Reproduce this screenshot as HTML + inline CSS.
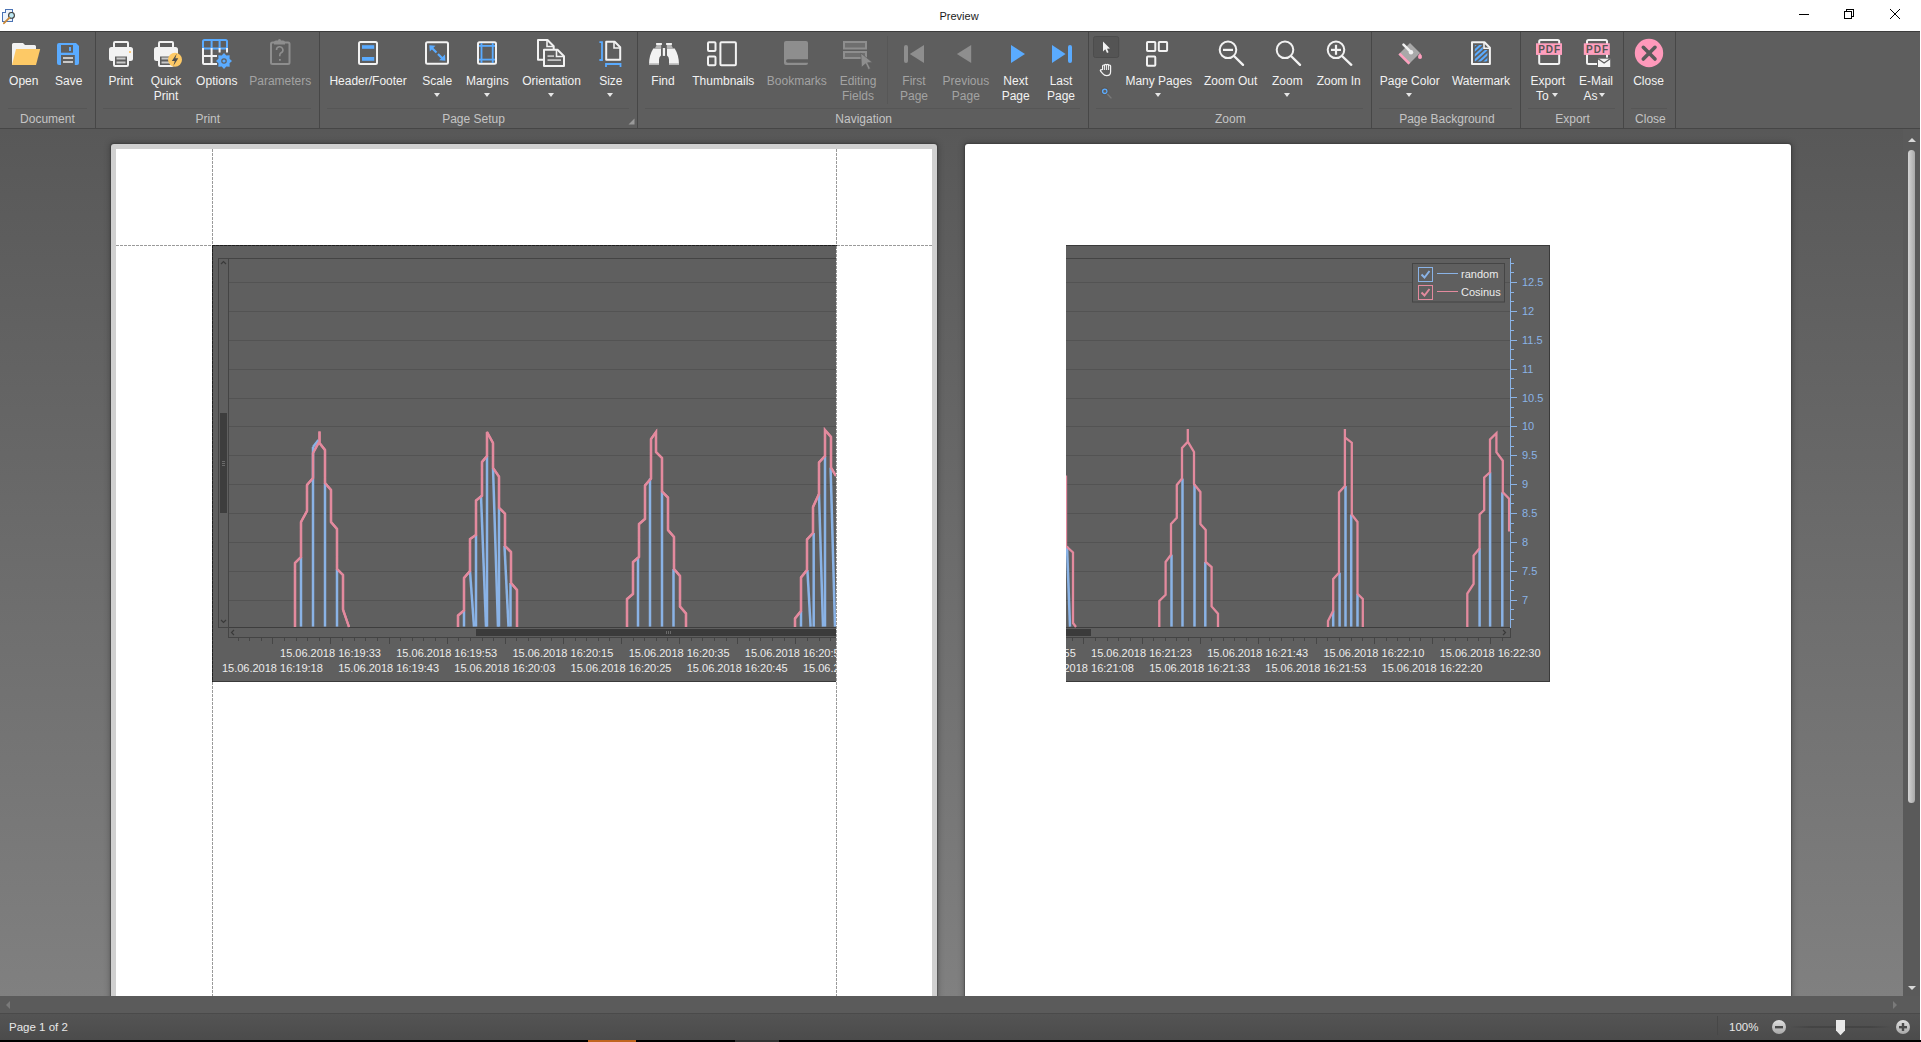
<!DOCTYPE html><html><head><meta charset="utf-8"><style>
*{margin:0;padding:0;box-sizing:border-box}
html,body{width:1921px;height:1042px;overflow:hidden;background:#fff;font-family:"Liberation Sans",sans-serif}
.a{position:absolute}
#title{left:0;top:0;width:1921px;height:31px;background:#fff}
#ribbon{left:0;top:31px;width:1920px;height:98px;background:#5e5e5e;border-top:1px solid #3c3c3c;border-bottom:1px solid #464646}
.sep{position:absolute;top:32px;width:1px;height:96px;background:#474747}
.sepf{position:absolute;top:36px;width:1px;height:68px;background:#575757}
.gl{position:absolute;top:108px;height:1px;background:#565656}
.lbl{position:absolute;top:74px;font-size:12px;line-height:15px;color:#f2f2f2;text-align:center;white-space:nowrap;transform:translateX(-50%)}
.dis{color:#a3a3a3}
.grp{position:absolute;top:112px;font-size:12px;line-height:15px;color:#c4c4c4;white-space:nowrap;transform:translateX(-50%)}
.dd{position:absolute;width:0;height:0;border-left:3.5px solid transparent;border-right:3.5px solid transparent;border-top:4px solid #e6e6e6}
#doc{left:0;top:129px;width:1903px;height:867px;background:linear-gradient(#585858,#808080)}
#vsb{left:1903px;top:129px;width:17px;height:867px;background:#5a5a5a}
#hsb{left:0;top:996px;width:1920px;height:18px;background:#5b5b5b;border-bottom:1px solid #4a4a4a}
#status{left:0;top:1014px;width:1920px;height:26px;background:linear-gradient(#545454,#4b4b4b)}
#black{left:0;top:1040px;width:1921px;height:2px;background:#000}
#rborder{left:1920px;top:0;width:1px;height:1040px;background:#fff}
.cl{position:absolute;font-size:11px;line-height:13px;color:#ececec;white-space:nowrap;transform:translateX(-50%)}
.al{position:absolute;font-size:11px;line-height:13px;color:#8ab3e6;white-space:nowrap}
.lg{position:absolute;font-size:11px;line-height:13px;color:#ececec;white-space:nowrap}
</style></head><body>
<div id="title" class="a"><div class="a" style="left:939.5px;top:8.5px;font-size:11px;line-height:15px;color:#1a1a1a">Preview</div></div>
<div id="ribbon" class="a"></div>
<div class="lbl" style="left:23.75px">Open</div>
<div class="lbl" style="left:68.8px">Save</div>
<div class="lbl" style="left:120.8px">Print</div>
<div class="lbl" style="left:166px">Quick<br>Print</div>
<div class="lbl" style="left:216.8px">Options</div>
<div class="lbl dis" style="left:280.25px">Parameters</div>
<div class="lbl" style="left:368.1px">Header/Footer</div>
<div class="lbl" style="left:437.2px">Scale</div>
<div class="dd" style="left:433.7px;top:93px"></div>
<div class="lbl" style="left:487.3px">Margins</div>
<div class="dd" style="left:483.8px;top:93px"></div>
<div class="lbl" style="left:551.5px">Orientation</div>
<div class="dd" style="left:548.0px;top:93px"></div>
<div class="lbl" style="left:610.8px">Size</div>
<div class="dd" style="left:607.3px;top:93px"></div>
<div class="lbl" style="left:663px">Find</div>
<div class="lbl" style="left:723.3px">Thumbnails</div>
<div class="lbl dis" style="left:796.8px">Bookmarks</div>
<div class="lbl dis" style="left:858px">Editing<br>Fields</div>
<div class="lbl dis" style="left:914px">First<br>Page</div>
<div class="lbl dis" style="left:965.8px">Previous<br>Page</div>
<div class="lbl" style="left:1015.7px">Next<br>Page</div>
<div class="lbl" style="left:1061px">Last<br>Page</div>
<div class="lbl" style="left:1158.75px">Many Pages</div>
<div class="dd" style="left:1155.2px;top:93px"></div>
<div class="lbl" style="left:1230.7px">Zoom Out</div>
<div class="lbl" style="left:1287.3px">Zoom</div>
<div class="dd" style="left:1283.8px;top:93px"></div>
<div class="lbl" style="left:1338.7px">Zoom In</div>
<div class="lbl" style="left:1409.75px">Page Color</div>
<div class="dd" style="left:1406.2px;top:93px"></div>
<div class="lbl" style="left:1481px">Watermark</div>
<div class="lbl" style="left:1547.8px">Export<br><span style="padding-right:11px">To</span></div>
<div class="lbl" style="left:1596px">E-Mail<br><span style="padding-right:11px">As</span></div>
<div class="lbl" style="left:1648.5px">Close</div>
<div class="dd" style="left:1551.6px;top:93px"></div>
<div class="dd" style="left:1598.6px;top:93px"></div>
<div class="grp" style="left:47.4px">Document</div>
<div class="grp" style="left:207.8px">Print</div>
<div class="grp" style="left:473.5px">Page Setup</div>
<div class="grp" style="left:863.7px">Navigation</div>
<div class="grp" style="left:1230.3px">Zoom</div>
<div class="grp" style="left:1446.9px">Page Background</div>
<div class="grp" style="left:1572.6px">Export</div>
<div class="grp" style="left:1650.4px">Close</div>
<div class="sep" style="left:95px"></div>
<div class="sep" style="left:319px"></div>
<div class="sep" style="left:637px"></div>
<div class="sep" style="left:1088px"></div>
<div class="sep" style="left:1371px"></div>
<div class="sep" style="left:1520px"></div>
<div class="sep" style="left:1623px"></div>
<div class="sep" style="left:1675px"></div>
<div class="sepf" style="left:887px"></div>
<div class="gl" style="left:8px;width:79px"></div>
<div class="gl" style="left:103px;width:208px"></div>
<div class="gl" style="left:327px;width:302px"></div>
<div class="gl" style="left:645px;width:435px"></div>
<div class="gl" style="left:1096px;width:267px"></div>
<div class="gl" style="left:1379px;width:133px"></div>
<div class="gl" style="left:1528px;width:87px"></div>
<div class="gl" style="left:1631px;width:36px"></div>
<svg class="a" style="left:0;top:0" width="1921" height="130" viewBox="0 0 1921 130">
<path d="M2.6,12.6 H5.6 V9.6 H12.6 V21.6 H2.6 Z" fill="#eef4fb" stroke="#4a72b4" stroke-width="1.2" shape-rendering="crispEdges"/>
<circle cx="11.5" cy="15.4" r="2.9" fill="#bfeaf5" stroke="#3a3a3a" stroke-width="1.1"/>
<line x1="9.3" y1="17.8" x2="4" y2="23.2" stroke="#c98a3a" stroke-width="1.9" stroke-linecap="round"/>
<g stroke="#000" stroke-width="1" fill="none" shape-rendering="crispEdges">
<line x1="1799" y1="14.5" x2="1809" y2="14.5"/>
<rect x="1844.5" y="11.5" width="7" height="7"/>
<polyline points="1846.5,11.5 1846.5,9.5 1853.5,9.5 1853.5,16.5 1851.5,16.5"/>
</g>
<g stroke="#000" stroke-width="1"><line x1="1890" y1="9" x2="1900" y2="19"/><line x1="1900" y1="9" x2="1890" y2="19"/></g>
<path d="M12,44.5 a1.5,1.5 0 0 1 1.5,-1.5 h9.5 l2,2 h9.5 a1.5,1.5 0 0 1 1.5,1.5 V65 H12 Z" fill="#f2f2f2"/>
<polygon points="16,49 40.2,49 36,65 12,65" fill="#fdc966"/>
<path d="M57,45 a2,2 0 0 1 2,-2 h17 l3,3 v17 a2,2 0 0 1 -2,2 h-18 a2,2 0 0 1 -2,-2 Z" fill="#5aabff"/>
<rect x="61" y="45" width="12" height="7.7" fill="#5e5e5e"/>
<rect x="69" y="47" width="2" height="4" fill="#5aabff"/>
<rect x="61" y="55" width="13.8" height="10" fill="#5e5e5e"/>
<rect x="63" y="57" width="10" height="2" fill="#c8c8c8"/><rect x="63" y="61" width="10" height="2" fill="#c8c8c8"/>
<g transform="translate(0,0)">
<rect x="114" y="42" width="14" height="9" rx="1" fill="#5e5e5e" stroke="#f2f2f2" stroke-width="2"/>
<rect x="109" y="47" width="24" height="14" rx="2.5" fill="#f2f2f2"/>
<rect x="114" y="55.5" width="14" height="10.5" rx="1" fill="#5e5e5e" stroke="#f2f2f2" stroke-width="2"/>
<rect x="116.5" y="57.5" width="9" height="2" fill="#c8c8c8"/><rect x="116.5" y="61.5" width="9" height="2" fill="#c8c8c8"/>
</g>
<g transform="translate(45,0)">
<rect x="114" y="42" width="14" height="9" rx="1" fill="#5e5e5e" stroke="#f2f2f2" stroke-width="2"/>
<rect x="109" y="47" width="24" height="14" rx="2.5" fill="#f2f2f2"/>
<rect x="114" y="55.5" width="14" height="10.5" rx="1" fill="#5e5e5e" stroke="#f2f2f2" stroke-width="2"/>
<rect x="116.5" y="57.5" width="9" height="2" fill="#c8c8c8"/><rect x="116.5" y="61.5" width="9" height="2" fill="#c8c8c8"/>
</g>
<circle cx="130" cy="52" r="1" fill="#fdb94d"/>
<circle cx="175" cy="59.8" r="7" fill="#fdc966"/>
<polygon points="176.8,53.5 171.8,61 174.8,61 173.3,66 178.3,58.3 175.3,58.3" fill="#4e4e4e"/>
<rect x="203" y="40" width="24" height="8.6" rx="1.5" fill="none" stroke="#5aabff" stroke-width="2"/>
<rect x="210.6" y="40" width="2" height="8" fill="#5aabff"/><rect x="218.6" y="40" width="2" height="8" fill="#5aabff"/>
<path d="M203,48 V63 a1,1 0 0 0 1,1 H217 M202,56 H217 M211.6,48 V64 M219.6,48 V52.5 M227,48 V52.5" fill="none" stroke="#f2f2f2" stroke-width="2"/>
<polygon points="224.00,53.00 226.30,55.46 229.66,55.34 229.54,58.70 232.00,61.00 229.54,63.30 229.66,66.66 226.30,66.54 224.00,69.00 221.70,66.54 218.34,66.66 218.46,63.30 216.00,61.00 218.46,58.70 218.34,55.34 221.70,55.46" fill="#5aabff"/>
<circle cx="224" cy="61" r="2.2" fill="none" stroke="#5e5e5e" stroke-width="1.2"/>
<rect x="271" y="42.5" width="18.5" height="21.5" rx="1.5" fill="none" stroke="#8e8e8e" stroke-width="2"/>
<path d="M274,44.5 h11 v-2 a2,2 0 0 0 -2,-2 h-2 a1.5,1.5 0 0 0 -3,0 h-2 a2,2 0 0 0 -2,2 Z" fill="#8e8e8e"/>
<path d="M276.5,50 a3.2,3.2 0 1 1 4.6,2.8 c-1,0.6 -1.3,1 -1.3,2.4 v1" fill="none" stroke="#8e8e8e" stroke-width="1.6"/>
<rect x="279" y="59" width="1.8" height="1.8" fill="#8e8e8e"/>
<rect x="359" y="42" width="18" height="22" rx="1.5" fill="none" stroke="#f2f2f2" stroke-width="2"/>
<rect x="362" y="45.2" width="12.2" height="3.6" fill="#5aabff"/><rect x="362" y="57" width="12.2" height="3.8" fill="#5aabff"/>
<rect x="426" y="42.3" width="22" height="21.5" rx="1.5" fill="none" stroke="#f2f2f2" stroke-width="2"/>
<line x1="431" y1="47" x2="436.5" y2="52.5" stroke="#5aabff" stroke-width="2.2"/><line x1="438" y1="54" x2="443.5" y2="59.5" stroke="#5aabff" stroke-width="2.2"/>
<polygon points="429.3,45.3 435.5,45.8 429.8,51.5" fill="#5aabff"/><polygon points="445.4,60.8 439.2,60.3 444.9,54.6" fill="#5aabff"/>
<rect x="478" y="42.3" width="18" height="21.5" rx="1.5" fill="none" stroke="#f2f2f2" stroke-width="2"/>
<rect x="480.6" y="43" width="1.8" height="20" fill="#5aabff"/><rect x="491.8" y="43" width="1.8" height="20" fill="#5aabff"/>
<rect x="479" y="45" width="16" height="1.8" fill="#5aabff"/><rect x="479" y="58.7" width="16" height="1.8" fill="#5aabff"/>
<path d="M538,40 h9.5 l6.2,6.2 V59.8 H538 Z" fill="none" stroke="#f2f2f2" stroke-width="2" stroke-linejoin="round"/>
<path d="M547,40 v6.5 h6.5" fill="none" stroke="#f2f2f2" stroke-width="1.6"/>
<path d="M544,49.7 h13.5 l6.5,6.5 V66 H544 Z" fill="#5e5e5e" stroke="#f2f2f2" stroke-width="2" stroke-linejoin="round"/>
<path d="M556.5,49.7 v6.8 h7" fill="none" stroke="#f2f2f2" stroke-width="1.6"/>
<rect x="547.5" y="55.2" width="6.5" height="1.8" fill="#c0c0c0"/><rect x="547.5" y="59.2" width="13.5" height="1.8" fill="#c0c0c0"/>
<path d="M606.2,41.7 h8.5 l5.5,5.5 V59.8 H606.2 Z" fill="none" stroke="#f2f2f2" stroke-width="2" stroke-linejoin="round"/>
<path d="M614,41.7 v6.3 h6.2" fill="none" stroke="#f2f2f2" stroke-width="1.6"/>
<path d="M599.4,42.2 h2.6 V60 h-2.6" fill="none" stroke="#5aabff" stroke-width="1.8"/>
<path d="M606,67 v-3 h14.5 v3" fill="none" stroke="#5aabff" stroke-width="1.8"/>
<g id="binoL">
<path d="M653.3,48.6 H661 V55.6 Q659,57.2 659,59.5 V65 H649 C649,58 650.5,53 653.3,48.6 Z" fill="#f2f2f2"/>
<path d="M656.7,44.8 H661.2 V48.8 H654.8 Z" fill="#b4b4b4"/>
<rect x="656" y="43" width="6" height="1.9" rx="0.6" fill="#f2f2f2"/>
<rect x="649" y="63.3" width="10" height="1.7" fill="#b4b4b4"/>
</g>
<use href="#binoL" transform="translate(1328,0) scale(-1,1)"/>
<rect x="662.8" y="48" width="2.3" height="7.9" fill="#f2f2f2"/>
<rect x="708" y="42.2" width="7.5" height="8.7" rx="1" fill="none" stroke="#f2f2f2" stroke-width="2"/>
<rect x="708" y="56.6" width="7.5" height="8.7" rx="1" fill="none" stroke="#f2f2f2" stroke-width="2"/>
<rect x="720.4" y="42.2" width="15.5" height="23.1" rx="1" fill="none" stroke="#f2f2f2" stroke-width="2"/>
<path d="M786,41 h20 a2,2 0 0 1 2,2 V63 a2,2 0 0 1 -2,2 H786 a2,2 0 0 1 -2,-2 V43 a2,2 0 0 1 2,-2 Z" fill="#8e8e8e"/>
<rect x="786" y="59.2" width="24" height="3.5" rx="1.75" fill="#5e5e5e"/>
<rect x="844" y="42" width="22" height="6.5" fill="#6f6f6f" stroke="#8e8e8e" stroke-width="2"/>
<rect x="844" y="52" width="22" height="6" fill="#6f6f6f" stroke="#8e8e8e" stroke-width="2"/>
<polygon points="860.8,53 872.5,62.5 867.6,62.8 870.5,68.5 868.3,69.5 865.6,63.8 861.5,67.3" fill="#8e8e8e" stroke="#5e5e5e" stroke-width="0.7"/>
<rect x="904" y="45" width="4" height="18" rx="2" fill="#8e8e8e"/>
<polygon points="909.8,54 924,45 924,63" fill="#8e8e8e"/>
<polygon points="956.9,54 971.2,45 971.2,63" fill="#8e8e8e"/>
<polygon points="1011,45 1025,54 1011,63" fill="#5aabff"/>
<polygon points="1052,45 1065.6,54 1052,63" fill="#5aabff"/>
<rect x="1068" y="45" width="4" height="18" rx="2" fill="#5aabff"/>
<rect x="1093.5" y="36.5" width="25.2" height="21" rx="2" fill="#545454" stroke="#4c4c4c" stroke-width="1"/>
<polygon points="1103,41.5 1103,51.5 1105.3,49.3 1107,53 1108.6,52.3 1107,48.7 1110,48.5" fill="#f2f2f2"/>
<path d="M1102.6,69.5 V66 a1,1 0 0 1 2,0 V65.3 a1,1 0 0 1 2,0 a1,1 0 0 1 2,0 V66 a1,1 0 0 1 2,0 V71.8 c0,2.3 -1.7,3.9 -4,3.9 c-1.8,0 -2.9,-0.8 -3.9,-2 l-2.2,-2.7 c-0.6,-0.8 0.3,-1.8 1.2,-1.2 Z" fill="none" stroke="#f2f2f2" stroke-width="1.2" stroke-linejoin="round"/>
<path d="M1104.6,65.5 V70 M1106.6,65.3 V70 M1108.6,66 V70" stroke="#f2f2f2" stroke-width="1"/>
<circle cx="1104.8" cy="91.3" r="2.2" fill="none" stroke="#5aabff" stroke-width="1.3"/>
<line x1="1106.6" y1="93.2" x2="1111.4" y2="98.4" stroke="#7a7a7a" stroke-width="1.4"/><circle cx="1104.7" cy="91.2" r="3.6" fill="none" stroke="#555" stroke-width="0.8"/>
<rect x="1147" y="42" width="8.3" height="9.1" rx="0.8" fill="none" stroke="#f2f2f2" stroke-width="2"/>
<rect x="1158.8" y="42" width="8.3" height="9.1" rx="0.8" fill="none" stroke="#f2f2f2" stroke-width="2"/>
<rect x="1147" y="56.6" width="8.3" height="9.1" rx="0.8" fill="none" stroke="#f2f2f2" stroke-width="2"/>
<circle cx="1228" cy="49.8" r="8.3" fill="none" stroke="#f2f2f2" stroke-width="2"/>
<line x1="1234" y1="56" x2="1243" y2="64.8" stroke="#f2f2f2" stroke-width="2.4" stroke-linecap="round"/>
<circle cx="1285" cy="49.8" r="8.3" fill="none" stroke="#f2f2f2" stroke-width="2"/>
<line x1="1291" y1="56" x2="1300" y2="64.8" stroke="#f2f2f2" stroke-width="2.4" stroke-linecap="round"/>
<circle cx="1336" cy="49.8" r="8.3" fill="none" stroke="#f2f2f2" stroke-width="2"/>
<line x1="1342" y1="56" x2="1351.3" y2="64.8" stroke="#f2f2f2" stroke-width="2.4" stroke-linecap="round"/>
<rect x="1223" y="48.8" width="10" height="2.2" fill="#f2f2f2"/>
<rect x="1331" y="48.8" width="10" height="2.2" fill="#f2f2f2"/><rect x="1334.9" y="44.8" width="2.2" height="10" fill="#f2f2f2"/>
<polygon points="1398.5,54.5 1410,43 1420,53 1408.5,64.5" fill="#a9a9a9"/>
<polygon points="1398.5,54.5 1400.3,52.7 1410.3,62.7 1408.5,64.5" fill="#ff9fbe"/>
<line x1="1403.5" y1="44.6" x2="1410.5" y2="51.6" stroke="#f2f2f2" stroke-width="2.6" stroke-linecap="round"/>
<circle cx="1411" cy="52.3" r="2.2" fill="#f2f2f2"/>
<circle cx="1420" cy="57" r="2" fill="#ff9fbe"/><polygon points="1418.2,56 1420,53 1421.8,56" fill="#ff9fbe"/>
<path d="M1472,42.3 h12.5 l5.4,5.4 V64 H1472 Z" fill="#5e5e5e" stroke="#f2f2f2" stroke-width="2" stroke-linejoin="round"/>
<path d="M1484,42.3 v6 h5.9" fill="none" stroke="#f2f2f2" stroke-width="1.6"/>
<clipPath id="wmc"><path d="M1474.8,45 h8 v5 h4.6 V61.6 H1474.8 Z"/></clipPath>
<g clip-path="url(#wmc)" stroke="#5aabff" stroke-width="2.1">
<line x1="1443.0" y1="64" x2="1465.0" y2="44"/>
<line x1="1448.6" y1="64" x2="1470.6" y2="44"/>
<line x1="1454.2" y1="64" x2="1476.2" y2="44"/>
<line x1="1459.8" y1="64" x2="1481.8" y2="44"/>
<line x1="1465.4" y1="64" x2="1487.4" y2="44"/>
<line x1="1471.0" y1="64" x2="1493.0" y2="44"/>
<line x1="1476.6" y1="64" x2="1498.6" y2="44"/>
<line x1="1482.2" y1="64" x2="1504.2" y2="44"/>
<line x1="1487.8" y1="64" x2="1509.8" y2="44"/>
</g>
<g transform="translate(0,0)">
<rect x="1539.2" y="40" width="20" height="24" rx="1.5" fill="none" stroke="#f2f2f2" stroke-width="2"/>
<rect x="1536" y="43.3" width="26" height="11.6" fill="#ff9fbe"/>
<text x="1538.2" y="52.8" font-family="Liberation Sans" font-weight="bold" font-size="10" fill="#555555" letter-spacing="1">PDF</text>
</g>
<g transform="translate(47.8,0)">
<rect x="1539.2" y="40" width="20" height="24" rx="1.5" fill="none" stroke="#f2f2f2" stroke-width="2"/>
<rect x="1536" y="43.3" width="26" height="11.6" fill="#ff9fbe"/>
<text x="1538.2" y="52.8" font-family="Liberation Sans" font-weight="bold" font-size="10" fill="#555555" letter-spacing="1">PDF</text>
</g>
<rect x="1597" y="57.6" width="14" height="10" fill="#5e5e5e"/>
<rect x="1598" y="58.7" width="12.2" height="8.3" fill="#f2f2f2"/>
<polyline points="1598,58.7 1604.1,63 1610.2,58.7" fill="none" stroke="#5e5e5e" stroke-width="1.2"/>
<circle cx="1649" cy="53" r="14.2" fill="#ff99bb"/>
<g stroke="#5a5a5a" stroke-width="3.6" stroke-linecap="round"><line x1="1643.3" y1="47.3" x2="1655" y2="59"/><line x1="1655" y1="47.3" x2="1643.3" y2="59"/></g>
<polygon points="634.5,118.5 634.5,124.5 628.5,124.5" fill="#9a9a9a"/>
</svg>
<div id="doc" class="a"></div>
<div class="a" style="left:111px;top:144px;width:826px;height:860px;border-radius:3px;background:#d0d0d0;box-shadow:0 0 1px 0.5px rgba(50,50,50,.4),0 0 6px 1px rgba(0,0,0,.28)"></div>
<div class="a" style="left:116px;top:149px;width:816px;height:860px;background:#fff"></div>
<div class="a" style="left:965px;top:144px;width:826px;height:860px;border-radius:3px;background:#fff;box-shadow:0 0 1px 0.5px rgba(50,50,50,.4),0 0 6px 1px rgba(0,0,0,.28)"></div>
<svg class="a" style="left:212px;top:244px" width="624" height="440" viewBox="212 244 624 440">
<g transform="translate(0,0)" shape-rendering="crispEdges">
<rect x="212" y="245" width="1108" height="437" fill="#5f5f5f"/>
<rect x="212" y="245" width="1108" height="1" fill="#3a3a3a"/>
<rect x="212" y="681" width="1108" height="1" fill="#3a3a3a"/>
<rect x="212" y="245" width="1" height="437" fill="#3a3a3a"/>
<rect x="1319" y="245" width="1" height="437" fill="#3a3a3a"/>
<rect x="218" y="258" width="1062" height="1" fill="#444"/>
<rect x="218" y="258" width="1" height="370" fill="#444"/>
<rect x="228" y="258" width="1" height="370" fill="#444"/>
<rect x="219" y="627" width="10" height="1" fill="#444"/>
<rect x="220" y="413" width="7" height="100" fill="#3d3d3d"/>
<rect x="229" y="282" width="1051" height="1" fill="#535353"/>
<rect x="229" y="311" width="1051" height="1" fill="#535353"/>
<rect x="229" y="340" width="1051" height="1" fill="#535353"/>
<rect x="229" y="369" width="1051" height="1" fill="#535353"/>
<rect x="229" y="398" width="1051" height="1" fill="#535353"/>
<rect x="229" y="426" width="1051" height="1" fill="#535353"/>
<rect x="229" y="455" width="1051" height="1" fill="#535353"/>
<rect x="229" y="484" width="1051" height="1" fill="#535353"/>
<rect x="229" y="513" width="1051" height="1" fill="#535353"/>
<rect x="229" y="542" width="1051" height="1" fill="#535353"/>
<rect x="229" y="571" width="1051" height="1" fill="#535353"/>
<rect x="229" y="600" width="1051" height="1" fill="#535353"/>
<rect x="228" y="627" width="1052" height="1" fill="#3e3e3e"/>
<rect x="228" y="637" width="1052" height="1" fill="#444"/>
<rect x="228" y="627" width="1" height="11" fill="#444"/>
<rect x="1280" y="627" width="1" height="11" fill="#444"/>
<rect x="476" y="629" width="385" height="7" fill="#3b3b3b"/>
<rect x="666" y="631" width="1" height="3" fill="#6a6a6a"/><rect x="668" y="631" width="1" height="3" fill="#6a6a6a"/><rect x="670" y="631" width="1" height="3" fill="#6a6a6a"/>
<rect x="222" y="461" width="3" height="1" fill="#6a6a6a"/><rect x="222" y="463" width="3" height="1" fill="#6a6a6a"/><rect x="222" y="465" width="3" height="1" fill="#6a6a6a"/>
<rect x="238" y="638" width="1" height="3" fill="#464646"/>
<rect x="249" y="638" width="1" height="3" fill="#464646"/>
<rect x="261" y="638" width="1" height="3" fill="#464646"/>
<rect x="272" y="638" width="1" height="6" fill="#464646"/>
<rect x="284" y="638" width="1" height="3" fill="#464646"/>
<rect x="296" y="638" width="1" height="3" fill="#464646"/>
<rect x="307" y="638" width="1" height="3" fill="#464646"/>
<rect x="319" y="638" width="1" height="3" fill="#464646"/>
<rect x="330" y="638" width="1" height="6" fill="#464646"/>
<rect x="342" y="638" width="1" height="3" fill="#464646"/>
<rect x="354" y="638" width="1" height="3" fill="#464646"/>
<rect x="365" y="638" width="1" height="3" fill="#464646"/>
<rect x="377" y="638" width="1" height="3" fill="#464646"/>
<rect x="389" y="638" width="1" height="6" fill="#464646"/>
<rect x="400" y="638" width="1" height="3" fill="#464646"/>
<rect x="412" y="638" width="1" height="3" fill="#464646"/>
<rect x="423" y="638" width="1" height="3" fill="#464646"/>
<rect x="435" y="638" width="1" height="3" fill="#464646"/>
<rect x="447" y="638" width="1" height="6" fill="#464646"/>
<rect x="458" y="638" width="1" height="3" fill="#464646"/>
<rect x="470" y="638" width="1" height="3" fill="#464646"/>
<rect x="482" y="638" width="1" height="3" fill="#464646"/>
<rect x="493" y="638" width="1" height="3" fill="#464646"/>
<rect x="505" y="638" width="1" height="6" fill="#464646"/>
<rect x="516" y="638" width="1" height="3" fill="#464646"/>
<rect x="528" y="638" width="1" height="3" fill="#464646"/>
<rect x="540" y="638" width="1" height="3" fill="#464646"/>
<rect x="551" y="638" width="1" height="3" fill="#464646"/>
<rect x="563" y="638" width="1" height="6" fill="#464646"/>
<rect x="575" y="638" width="1" height="3" fill="#464646"/>
<rect x="586" y="638" width="1" height="3" fill="#464646"/>
<rect x="598" y="638" width="1" height="3" fill="#464646"/>
<rect x="609" y="638" width="1" height="3" fill="#464646"/>
<rect x="621" y="638" width="1" height="6" fill="#464646"/>
<rect x="633" y="638" width="1" height="3" fill="#464646"/>
<rect x="644" y="638" width="1" height="3" fill="#464646"/>
<rect x="656" y="638" width="1" height="3" fill="#464646"/>
<rect x="667" y="638" width="1" height="3" fill="#464646"/>
<rect x="679" y="638" width="1" height="6" fill="#464646"/>
<rect x="691" y="638" width="1" height="3" fill="#464646"/>
<rect x="702" y="638" width="1" height="3" fill="#464646"/>
<rect x="714" y="638" width="1" height="3" fill="#464646"/>
<rect x="726" y="638" width="1" height="3" fill="#464646"/>
<rect x="737" y="638" width="1" height="6" fill="#464646"/>
<rect x="749" y="638" width="1" height="3" fill="#464646"/>
<rect x="760" y="638" width="1" height="3" fill="#464646"/>
<rect x="772" y="638" width="1" height="3" fill="#464646"/>
<rect x="784" y="638" width="1" height="3" fill="#464646"/>
<rect x="795" y="638" width="1" height="6" fill="#464646"/>
<rect x="807" y="638" width="1" height="3" fill="#464646"/>
<rect x="819" y="638" width="1" height="3" fill="#464646"/>
<rect x="830" y="638" width="1" height="3" fill="#464646"/>
<rect x="842" y="638" width="1" height="3" fill="#464646"/>
<rect x="853" y="638" width="1" height="6" fill="#464646"/>
<rect x="865" y="638" width="1" height="3" fill="#464646"/>
<rect x="877" y="638" width="1" height="3" fill="#464646"/>
<rect x="888" y="638" width="1" height="3" fill="#464646"/>
<rect x="900" y="638" width="1" height="3" fill="#464646"/>
<rect x="912" y="638" width="1" height="6" fill="#464646"/>
<rect x="923" y="638" width="1" height="3" fill="#464646"/>
<rect x="935" y="638" width="1" height="3" fill="#464646"/>
<rect x="946" y="638" width="1" height="3" fill="#464646"/>
<rect x="958" y="638" width="1" height="3" fill="#464646"/>
<rect x="970" y="638" width="1" height="6" fill="#464646"/>
<rect x="981" y="638" width="1" height="3" fill="#464646"/>
<rect x="993" y="638" width="1" height="3" fill="#464646"/>
<rect x="1004" y="638" width="1" height="3" fill="#464646"/>
<rect x="1016" y="638" width="1" height="3" fill="#464646"/>
<rect x="1028" y="638" width="1" height="6" fill="#464646"/>
<rect x="1039" y="638" width="1" height="3" fill="#464646"/>
<rect x="1051" y="638" width="1" height="3" fill="#464646"/>
<rect x="1063" y="638" width="1" height="3" fill="#464646"/>
<rect x="1074" y="638" width="1" height="3" fill="#464646"/>
<rect x="1086" y="638" width="1" height="6" fill="#464646"/>
<rect x="1097" y="638" width="1" height="3" fill="#464646"/>
<rect x="1109" y="638" width="1" height="3" fill="#464646"/>
<rect x="1121" y="638" width="1" height="3" fill="#464646"/>
<rect x="1132" y="638" width="1" height="3" fill="#464646"/>
<rect x="1144" y="638" width="1" height="6" fill="#464646"/>
<rect x="1156" y="638" width="1" height="3" fill="#464646"/>
<rect x="1167" y="638" width="1" height="3" fill="#464646"/>
<rect x="1179" y="638" width="1" height="3" fill="#464646"/>
<rect x="1190" y="638" width="1" height="3" fill="#464646"/>
<rect x="1202" y="638" width="1" height="6" fill="#464646"/>
<rect x="1214" y="638" width="1" height="3" fill="#464646"/>
<rect x="1225" y="638" width="1" height="3" fill="#464646"/>
<rect x="1237" y="638" width="1" height="3" fill="#464646"/>
<rect x="1248" y="638" width="1" height="3" fill="#464646"/>
<rect x="1260" y="638" width="1" height="6" fill="#464646"/>
<rect x="1272" y="638" width="1" height="3" fill="#464646"/>
</g>
<g fill="none" stroke="#3a3a3a" stroke-width="1.2">
<polyline points="221,264 223.5,261.5 226,264"/>
<polyline points="221,620 223.5,622.5 226,620"/>
<polyline points="234,630 231.5,632.5 234,635"/>
</g>
<g fill="none" stroke="#e38a9e" stroke-width="2.3" stroke-linejoin="miter">
<polyline points="295,627 295,563 301,557 301,522 307,511 307,485 313,478 313,453 318.5,443 319.5,443 319.5,431.5 319.5,443 325,450 325,483 331,490 331,522 337,529 337,569 343,575 343,609.5 349,627"/>
<polyline points="458,627 458,615.5 464,610.5 464,578 470,571 470,539 476,535 476,500.6 482,495.6 482,462 487,456 487,432 493,443 493,468 499,476.5 499,507.7 505,513.7 505,546 511,552 511,583 517,590 517,627"/>
<polyline points="627,627 627,599 633,594 633,562 639,557 639,524 645,519 645,485.5 651,478.5 651,439 656,432 656,452 662,458 662,491.6 668,497.6 668,530 674,537 674,569 680,576 680,606.5 686,613.5 686,627"/>
<polyline points="795,627 795,618.5 801,611 801,577.5 807,570 807,539.5 813,533 813,507 819,494 819,462.5 825,456 825,430 831,437 831,467.7 836,476"/>
</g>
<g stroke="#8ab3e6" stroke-width="2.5">
<line x1="301" y1="626.6" x2="301" y2="557"/><line x1="313" y1="626.6" x2="313" y2="447"/><line x1="325" y1="626.6" x2="325" y2="483"/><line x1="337" y1="626.6" x2="337" y2="569"/><line x1="313" y1="447" x2="318.5" y2="440"/>
<line x1="464" y1="626.6" x2="464" y2="610.5"/><line x1="474" y1="626.6" x2="470" y2="571"/><line x1="476" y1="626.6" x2="476" y2="535"/><line x1="486" y1="626.6" x2="481" y2="495.6"/><line x1="487" y1="626.6" x2="487" y2="456"/><line x1="498" y1="626.6" x2="493" y2="468"/><line x1="499" y1="626.6" x2="499" y2="507.7"/><line x1="508.5" y1="626.6" x2="504.5" y2="546"/><line x1="510.5" y1="626.6" x2="510.5" y2="583"/>
<line x1="638" y1="626.6" x2="638" y2="557"/><line x1="650" y1="626.6" x2="650" y2="478.5"/><line x1="662" y1="626.6" x2="662" y2="491.6"/><line x1="673.5" y1="626.6" x2="673.5" y2="569"/>
<line x1="801" y1="626.6" x2="801" y2="611"/><line x1="810.6" y1="626.6" x2="807.4" y2="570"/><line x1="813.7" y1="626.6" x2="813.7" y2="533"/><line x1="823" y1="626.6" x2="819" y2="494"/><line x1="825" y1="626.6" x2="825" y2="456"/><line x1="835" y1="626.6" x2="830.6" y2="467.7"/>
</g>
<g fill="none" stroke="#e38a9e" stroke-width="2.3" stroke-linejoin="miter">
<polyline points="295,627 295,563 301,557 301,522 307,511 307,485 313,478 313,453 318.5,443 319.5,443 319.5,431.5 319.5,443 325,450 325,483 331,490 331,522 337,529 337,569 343,575 343,609.5 349,627"/>
<polyline points="458,627 458,615.5 464,610.5 464,578 470,571 470,539 476,535 476,500.6 482,495.6 482,462 487,456 487,432 493,443 493,468 499,476.5 499,507.7 505,513.7 505,546 511,552 511,583 517,590 517,627"/>
<polyline points="627,627 627,599 633,594 633,562 639,557 639,524 645,519 645,485.5 651,478.5 651,439 656,432 656,452 662,458 662,491.6 668,497.6 668,530 674,537 674,569 680,576 680,606.5 686,613.5 686,627"/>
<polyline points="795,627 795,618.5 801,611 801,577.5 807,570 807,539.5 813,533 813,507 819,494 819,462.5 825,456 825,430 831,437 831,467.7 836,476"/>
</g>
</svg>
<div class="a" style="left:212px;top:640px;width:624px;height:41px;overflow:hidden"><div class="a" style="left:-212px;top:-640px;width:2000px;height:700px"><div class="cl" style="left:330.5px;top:647px">15.06.2018 16:19:33</div>
<div class="cl" style="left:446.7px;top:647px">15.06.2018 16:19:53</div>
<div class="cl" style="left:562.9px;top:647px">15.06.2018 16:20:15</div>
<div class="cl" style="left:679.1px;top:647px">15.06.2018 16:20:35</div>
<div class="cl" style="left:795.3px;top:647px">15.06.2018 16:20:55</div>
<div class="cl" style="left:911.5px;top:647px">15.06.2018 16:21:23</div>
<div class="cl" style="left:1027.7px;top:647px">15.06.2018 16:21:43</div>
<div class="cl" style="left:1143.9px;top:647px">15.06.2018 16:22:10</div>
<div class="cl" style="left:1260.1px;top:647px">15.06.2018 16:22:30</div>
<div class="cl" style="left:272.4px;top:662px">15.06.2018 16:19:18</div>
<div class="cl" style="left:388.6px;top:662px">15.06.2018 16:19:43</div>
<div class="cl" style="left:504.8px;top:662px">15.06.2018 16:20:03</div>
<div class="cl" style="left:621.0px;top:662px">15.06.2018 16:20:25</div>
<div class="cl" style="left:737.2px;top:662px">15.06.2018 16:20:45</div>
<div class="cl" style="left:853.4px;top:662px">15.06.2018 16:21:08</div>
<div class="cl" style="left:969.6px;top:662px">15.06.2018 16:21:33</div>
<div class="cl" style="left:1085.8px;top:662px">15.06.2018 16:21:53</div>
<div class="cl" style="left:1202.0px;top:662px">15.06.2018 16:22:20</div></div></div>
<svg class="a" style="left:0;top:0" width="1921" height="996" viewBox="0 0 1921 996" shape-rendering="crispEdges"><g stroke="#9a9a9a" stroke-width="1" stroke-dasharray="2.6 1.4" fill="none"><line x1="212.5" y1="149" x2="212.5" y2="245"/><line x1="212.5" y1="682" x2="212.5" y2="996"/><line x1="836.5" y1="149" x2="836.5" y2="245"/><line x1="836.5" y1="682" x2="836.5" y2="996"/><line x1="116" y1="245.5" x2="212" y2="245.5"/><line x1="837" y1="245.5" x2="932" y2="245.5"/></g><g stroke="#1e1e1e" stroke-width="1" stroke-dasharray="3.2 0.8" fill="none"><line x1="212" y1="245.5" x2="837" y2="245.5"/><line x1="212.5" y1="245" x2="212.5" y2="682"/></g><g stroke="#9a9a9a" stroke-width="1" stroke-dasharray="2.6 1.4" fill="none"><line x1="836.5" y1="246" x2="836.5" y2="682"/></g></svg>
<svg class="a" style="left:1066px;top:244px" width="484" height="440" viewBox="1066 244 484 440">
<g transform="translate(230,0)" shape-rendering="crispEdges">
<rect x="212" y="245" width="1108" height="437" fill="#5f5f5f"/>
<rect x="212" y="245" width="1108" height="1" fill="#3a3a3a"/>
<rect x="212" y="681" width="1108" height="1" fill="#3a3a3a"/>
<rect x="212" y="245" width="1" height="437" fill="#3a3a3a"/>
<rect x="1319" y="245" width="1" height="437" fill="#3a3a3a"/>
<rect x="218" y="258" width="1062" height="1" fill="#444"/>
<rect x="218" y="258" width="1" height="370" fill="#444"/>
<rect x="228" y="258" width="1" height="370" fill="#444"/>
<rect x="219" y="627" width="10" height="1" fill="#444"/>
<rect x="220" y="413" width="7" height="100" fill="#3d3d3d"/>
<rect x="229" y="282" width="1051" height="1" fill="#535353"/>
<rect x="229" y="311" width="1051" height="1" fill="#535353"/>
<rect x="229" y="340" width="1051" height="1" fill="#535353"/>
<rect x="229" y="369" width="1051" height="1" fill="#535353"/>
<rect x="229" y="398" width="1051" height="1" fill="#535353"/>
<rect x="229" y="426" width="1051" height="1" fill="#535353"/>
<rect x="229" y="455" width="1051" height="1" fill="#535353"/>
<rect x="229" y="484" width="1051" height="1" fill="#535353"/>
<rect x="229" y="513" width="1051" height="1" fill="#535353"/>
<rect x="229" y="542" width="1051" height="1" fill="#535353"/>
<rect x="229" y="571" width="1051" height="1" fill="#535353"/>
<rect x="229" y="600" width="1051" height="1" fill="#535353"/>
<rect x="228" y="627" width="1052" height="1" fill="#3e3e3e"/>
<rect x="228" y="637" width="1052" height="1" fill="#444"/>
<rect x="228" y="627" width="1" height="11" fill="#444"/>
<rect x="1280" y="627" width="1" height="11" fill="#444"/>
<rect x="476" y="629" width="385" height="7" fill="#3b3b3b"/>
<rect x="666" y="631" width="1" height="3" fill="#6a6a6a"/><rect x="668" y="631" width="1" height="3" fill="#6a6a6a"/><rect x="670" y="631" width="1" height="3" fill="#6a6a6a"/>
<rect x="222" y="461" width="3" height="1" fill="#6a6a6a"/><rect x="222" y="463" width="3" height="1" fill="#6a6a6a"/><rect x="222" y="465" width="3" height="1" fill="#6a6a6a"/>
<rect x="238" y="638" width="1" height="3" fill="#464646"/>
<rect x="249" y="638" width="1" height="3" fill="#464646"/>
<rect x="261" y="638" width="1" height="3" fill="#464646"/>
<rect x="272" y="638" width="1" height="6" fill="#464646"/>
<rect x="284" y="638" width="1" height="3" fill="#464646"/>
<rect x="296" y="638" width="1" height="3" fill="#464646"/>
<rect x="307" y="638" width="1" height="3" fill="#464646"/>
<rect x="319" y="638" width="1" height="3" fill="#464646"/>
<rect x="330" y="638" width="1" height="6" fill="#464646"/>
<rect x="342" y="638" width="1" height="3" fill="#464646"/>
<rect x="354" y="638" width="1" height="3" fill="#464646"/>
<rect x="365" y="638" width="1" height="3" fill="#464646"/>
<rect x="377" y="638" width="1" height="3" fill="#464646"/>
<rect x="389" y="638" width="1" height="6" fill="#464646"/>
<rect x="400" y="638" width="1" height="3" fill="#464646"/>
<rect x="412" y="638" width="1" height="3" fill="#464646"/>
<rect x="423" y="638" width="1" height="3" fill="#464646"/>
<rect x="435" y="638" width="1" height="3" fill="#464646"/>
<rect x="447" y="638" width="1" height="6" fill="#464646"/>
<rect x="458" y="638" width="1" height="3" fill="#464646"/>
<rect x="470" y="638" width="1" height="3" fill="#464646"/>
<rect x="482" y="638" width="1" height="3" fill="#464646"/>
<rect x="493" y="638" width="1" height="3" fill="#464646"/>
<rect x="505" y="638" width="1" height="6" fill="#464646"/>
<rect x="516" y="638" width="1" height="3" fill="#464646"/>
<rect x="528" y="638" width="1" height="3" fill="#464646"/>
<rect x="540" y="638" width="1" height="3" fill="#464646"/>
<rect x="551" y="638" width="1" height="3" fill="#464646"/>
<rect x="563" y="638" width="1" height="6" fill="#464646"/>
<rect x="575" y="638" width="1" height="3" fill="#464646"/>
<rect x="586" y="638" width="1" height="3" fill="#464646"/>
<rect x="598" y="638" width="1" height="3" fill="#464646"/>
<rect x="609" y="638" width="1" height="3" fill="#464646"/>
<rect x="621" y="638" width="1" height="6" fill="#464646"/>
<rect x="633" y="638" width="1" height="3" fill="#464646"/>
<rect x="644" y="638" width="1" height="3" fill="#464646"/>
<rect x="656" y="638" width="1" height="3" fill="#464646"/>
<rect x="667" y="638" width="1" height="3" fill="#464646"/>
<rect x="679" y="638" width="1" height="6" fill="#464646"/>
<rect x="691" y="638" width="1" height="3" fill="#464646"/>
<rect x="702" y="638" width="1" height="3" fill="#464646"/>
<rect x="714" y="638" width="1" height="3" fill="#464646"/>
<rect x="726" y="638" width="1" height="3" fill="#464646"/>
<rect x="737" y="638" width="1" height="6" fill="#464646"/>
<rect x="749" y="638" width="1" height="3" fill="#464646"/>
<rect x="760" y="638" width="1" height="3" fill="#464646"/>
<rect x="772" y="638" width="1" height="3" fill="#464646"/>
<rect x="784" y="638" width="1" height="3" fill="#464646"/>
<rect x="795" y="638" width="1" height="6" fill="#464646"/>
<rect x="807" y="638" width="1" height="3" fill="#464646"/>
<rect x="819" y="638" width="1" height="3" fill="#464646"/>
<rect x="830" y="638" width="1" height="3" fill="#464646"/>
<rect x="842" y="638" width="1" height="3" fill="#464646"/>
<rect x="853" y="638" width="1" height="6" fill="#464646"/>
<rect x="865" y="638" width="1" height="3" fill="#464646"/>
<rect x="877" y="638" width="1" height="3" fill="#464646"/>
<rect x="888" y="638" width="1" height="3" fill="#464646"/>
<rect x="900" y="638" width="1" height="3" fill="#464646"/>
<rect x="912" y="638" width="1" height="6" fill="#464646"/>
<rect x="923" y="638" width="1" height="3" fill="#464646"/>
<rect x="935" y="638" width="1" height="3" fill="#464646"/>
<rect x="946" y="638" width="1" height="3" fill="#464646"/>
<rect x="958" y="638" width="1" height="3" fill="#464646"/>
<rect x="970" y="638" width="1" height="6" fill="#464646"/>
<rect x="981" y="638" width="1" height="3" fill="#464646"/>
<rect x="993" y="638" width="1" height="3" fill="#464646"/>
<rect x="1004" y="638" width="1" height="3" fill="#464646"/>
<rect x="1016" y="638" width="1" height="3" fill="#464646"/>
<rect x="1028" y="638" width="1" height="6" fill="#464646"/>
<rect x="1039" y="638" width="1" height="3" fill="#464646"/>
<rect x="1051" y="638" width="1" height="3" fill="#464646"/>
<rect x="1063" y="638" width="1" height="3" fill="#464646"/>
<rect x="1074" y="638" width="1" height="3" fill="#464646"/>
<rect x="1086" y="638" width="1" height="6" fill="#464646"/>
<rect x="1097" y="638" width="1" height="3" fill="#464646"/>
<rect x="1109" y="638" width="1" height="3" fill="#464646"/>
<rect x="1121" y="638" width="1" height="3" fill="#464646"/>
<rect x="1132" y="638" width="1" height="3" fill="#464646"/>
<rect x="1144" y="638" width="1" height="6" fill="#464646"/>
<rect x="1156" y="638" width="1" height="3" fill="#464646"/>
<rect x="1167" y="638" width="1" height="3" fill="#464646"/>
<rect x="1179" y="638" width="1" height="3" fill="#464646"/>
<rect x="1190" y="638" width="1" height="3" fill="#464646"/>
<rect x="1202" y="638" width="1" height="6" fill="#464646"/>
<rect x="1214" y="638" width="1" height="3" fill="#464646"/>
<rect x="1225" y="638" width="1" height="3" fill="#464646"/>
<rect x="1237" y="638" width="1" height="3" fill="#464646"/>
<rect x="1248" y="638" width="1" height="3" fill="#464646"/>
<rect x="1260" y="638" width="1" height="6" fill="#464646"/>
<rect x="1272" y="638" width="1" height="3" fill="#464646"/>
</g>
<g fill="none" stroke="#3a3a3a" stroke-width="1.2">
<polyline points="1503,630 1505.5,632.5 1503,635"/>
</g>
<g stroke="#8ab3e6" stroke-width="2.5">
<line x1="1070" y1="626.6" x2="1067" y2="546"/>
<line x1="1171.5" y1="626.6" x2="1171.5" y2="554.7"/><line x1="1182.5" y1="626.6" x2="1182.5" y2="478.6"/><line x1="1194.5" y1="626.6" x2="1194.5" y2="484"/><line x1="1205.3" y1="626.6" x2="1205.3" y2="562"/>
<line x1="1333.2" y1="626.6" x2="1333.2" y2="610.7"/><line x1="1339.6" y1="626.6" x2="1339.6" y2="572.7"/><line x1="1345.5" y1="626.6" x2="1345.5" y2="486"/><line x1="1351.2" y1="626.6" x2="1351.2" y2="514.6"/><line x1="1357.5" y1="626.6" x2="1357.5" y2="593.8"/>
<line x1="1479.6" y1="626.6" x2="1479.6" y2="548.3"/><line x1="1490.1" y1="626.6" x2="1490.1" y2="472.3"/><line x1="1502.3" y1="626.6" x2="1502.3" y2="492.3"/>
</g>
<g fill="none" stroke="#e38a9e" stroke-width="2.3" stroke-linejoin="miter">
<polyline points="1066,475.5 1066,546 1073,552.5 1073,623 1076,627"/>
<polyline points="1159.3,627 1159.3,601 1165.6,594.8 1165.6,562 1171,554.7 1171,524 1176.8,517.7 1176.8,485 1182,478.6 1182,448 1187.8,441.7 1187.8,429 1187.8,441.7 1194,452 1194,484 1200.4,492 1200.4,524 1205.7,530 1205.7,562 1211.6,567 1211.6,606.4 1218,613.8 1218,627"/>
<polyline points="1328,627 1328,621 1333.2,610.7 1333.2,579 1339,572.7 1339,492.4 1344.9,486 1344.9,429 1344.9,437.5 1351.8,442.7 1351.8,514.6 1357.5,522 1357.5,593.8 1362.8,599 1362.8,627"/>
<polyline points="1467.3,627 1467.3,593.6 1473.6,584 1473.6,555.6 1479.6,548.3 1479.6,514.5 1484.2,510 1484.2,477.5 1490,472.3 1490,439.5 1496.4,433.2 1496.4,452.2 1502.8,460.7 1502.8,492.3 1509.1,498.7 1509.1,531.4"/>
</g>
<rect x="1510" y="258" width="1" height="370" fill="#8ab3e6" shape-rendering="crispEdges"/>
<rect x="1511" y="263" width="3" height="1" fill="#8ab3e6" shape-rendering="crispEdges"/>
<rect x="1511" y="272" width="3" height="1" fill="#8ab3e6" shape-rendering="crispEdges"/>
<rect x="1511" y="282" width="6" height="1" fill="#8ab3e6" shape-rendering="crispEdges"/>
<rect x="1511" y="292" width="3" height="1" fill="#8ab3e6" shape-rendering="crispEdges"/>
<rect x="1511" y="301" width="3" height="1" fill="#8ab3e6" shape-rendering="crispEdges"/>
<rect x="1511" y="311" width="6" height="1" fill="#8ab3e6" shape-rendering="crispEdges"/>
<rect x="1511" y="320" width="3" height="1" fill="#8ab3e6" shape-rendering="crispEdges"/>
<rect x="1511" y="330" width="3" height="1" fill="#8ab3e6" shape-rendering="crispEdges"/>
<rect x="1511" y="340" width="6" height="1" fill="#8ab3e6" shape-rendering="crispEdges"/>
<rect x="1511" y="349" width="3" height="1" fill="#8ab3e6" shape-rendering="crispEdges"/>
<rect x="1511" y="359" width="3" height="1" fill="#8ab3e6" shape-rendering="crispEdges"/>
<rect x="1511" y="369" width="6" height="1" fill="#8ab3e6" shape-rendering="crispEdges"/>
<rect x="1511" y="378" width="3" height="1" fill="#8ab3e6" shape-rendering="crispEdges"/>
<rect x="1511" y="388" width="3" height="1" fill="#8ab3e6" shape-rendering="crispEdges"/>
<rect x="1511" y="397" width="6" height="1" fill="#8ab3e6" shape-rendering="crispEdges"/>
<rect x="1511" y="407" width="3" height="1" fill="#8ab3e6" shape-rendering="crispEdges"/>
<rect x="1511" y="417" width="3" height="1" fill="#8ab3e6" shape-rendering="crispEdges"/>
<rect x="1511" y="426" width="6" height="1" fill="#8ab3e6" shape-rendering="crispEdges"/>
<rect x="1511" y="436" width="3" height="1" fill="#8ab3e6" shape-rendering="crispEdges"/>
<rect x="1511" y="446" width="3" height="1" fill="#8ab3e6" shape-rendering="crispEdges"/>
<rect x="1511" y="455" width="6" height="1" fill="#8ab3e6" shape-rendering="crispEdges"/>
<rect x="1511" y="465" width="3" height="1" fill="#8ab3e6" shape-rendering="crispEdges"/>
<rect x="1511" y="475" width="3" height="1" fill="#8ab3e6" shape-rendering="crispEdges"/>
<rect x="1511" y="484" width="6" height="1" fill="#8ab3e6" shape-rendering="crispEdges"/>
<rect x="1511" y="494" width="3" height="1" fill="#8ab3e6" shape-rendering="crispEdges"/>
<rect x="1511" y="503" width="3" height="1" fill="#8ab3e6" shape-rendering="crispEdges"/>
<rect x="1511" y="513" width="6" height="1" fill="#8ab3e6" shape-rendering="crispEdges"/>
<rect x="1511" y="523" width="3" height="1" fill="#8ab3e6" shape-rendering="crispEdges"/>
<rect x="1511" y="532" width="3" height="1" fill="#8ab3e6" shape-rendering="crispEdges"/>
<rect x="1511" y="542" width="6" height="1" fill="#8ab3e6" shape-rendering="crispEdges"/>
<rect x="1511" y="552" width="3" height="1" fill="#8ab3e6" shape-rendering="crispEdges"/>
<rect x="1511" y="561" width="3" height="1" fill="#8ab3e6" shape-rendering="crispEdges"/>
<rect x="1511" y="571" width="6" height="1" fill="#8ab3e6" shape-rendering="crispEdges"/>
<rect x="1511" y="580" width="3" height="1" fill="#8ab3e6" shape-rendering="crispEdges"/>
<rect x="1511" y="590" width="3" height="1" fill="#8ab3e6" shape-rendering="crispEdges"/>
<rect x="1511" y="600" width="6" height="1" fill="#8ab3e6" shape-rendering="crispEdges"/>
<rect x="1511" y="609" width="3" height="1" fill="#8ab3e6" shape-rendering="crispEdges"/>
<rect x="1511" y="619" width="3" height="1" fill="#8ab3e6" shape-rendering="crispEdges"/>
<rect x="1412.5" y="263.5" width="92" height="38.5" fill="#5f5f5f" stroke="#454545" stroke-width="1"/>
<rect x="1418.5" y="267.5" width="14" height="14" fill="none" stroke="#8ab3e6" stroke-width="1"/>
<rect x="1418.5" y="285.5" width="14" height="14" fill="none" stroke="#e38a9e" stroke-width="1"/>
<polyline points="1421.5,274.5 1424.5,277.5 1429.5,271" fill="none" stroke="#8ab3e6" stroke-width="2"/>
<polyline points="1421.5,292.5 1424.5,295.5 1429.5,289" fill="none" stroke="#e38a9e" stroke-width="2"/>
<rect x="1437" y="273" width="21" height="1" fill="#8ab3e6"/>
<rect x="1437" y="291" width="21" height="1" fill="#e38a9e"/>
</svg>
<div class="a" style="left:1066px;top:640px;width:484px;height:41px;overflow:hidden"><div class="a" style="left:-1066px;top:-640px;width:2000px;height:700px"><div class="cl" style="left:560.5px;top:647px">15.06.2018 16:19:33</div>
<div class="cl" style="left:676.7px;top:647px">15.06.2018 16:19:53</div>
<div class="cl" style="left:792.9px;top:647px">15.06.2018 16:20:15</div>
<div class="cl" style="left:909.1px;top:647px">15.06.2018 16:20:35</div>
<div class="cl" style="left:1025.3px;top:647px">15.06.2018 16:20:55</div>
<div class="cl" style="left:1141.5px;top:647px">15.06.2018 16:21:23</div>
<div class="cl" style="left:1257.7px;top:647px">15.06.2018 16:21:43</div>
<div class="cl" style="left:1373.9px;top:647px">15.06.2018 16:22:10</div>
<div class="cl" style="left:1490.1px;top:647px">15.06.2018 16:22:30</div>
<div class="cl" style="left:502.4px;top:662px">15.06.2018 16:19:18</div>
<div class="cl" style="left:618.6px;top:662px">15.06.2018 16:19:43</div>
<div class="cl" style="left:734.8px;top:662px">15.06.2018 16:20:03</div>
<div class="cl" style="left:851.0px;top:662px">15.06.2018 16:20:25</div>
<div class="cl" style="left:967.2px;top:662px">15.06.2018 16:20:45</div>
<div class="cl" style="left:1083.4px;top:662px">15.06.2018 16:21:08</div>
<div class="cl" style="left:1199.6px;top:662px">15.06.2018 16:21:33</div>
<div class="cl" style="left:1315.8px;top:662px">15.06.2018 16:21:53</div>
<div class="cl" style="left:1432.0px;top:662px">15.06.2018 16:22:20</div></div></div>
<div class="al" style="left:1522px;top:276px">12.5</div>
<div class="al" style="left:1522px;top:305px">12</div>
<div class="al" style="left:1522px;top:334px">11.5</div>
<div class="al" style="left:1522px;top:363px">11</div>
<div class="al" style="left:1522px;top:392px">10.5</div>
<div class="al" style="left:1522px;top:420px">10</div>
<div class="al" style="left:1522px;top:449px">9.5</div>
<div class="al" style="left:1522px;top:478px">9</div>
<div class="al" style="left:1522px;top:507px">8.5</div>
<div class="al" style="left:1522px;top:536px">8</div>
<div class="al" style="left:1522px;top:565px">7.5</div>
<div class="al" style="left:1522px;top:594px">7</div>
<div class="lg" style="left:1461px;top:268px">random</div><div class="lg" style="left:1461px;top:286px">Cosinus</div>
<div id="vsb" class="a"></div>
<div class="a" style="left:1908px;top:150px;width:7px;height:653px;border-radius:3.5px;background:linear-gradient(90deg,#d4d4d4,#a9a9a9)"></div>
<div class="a" style="left:1907.5px;top:138px;width:0;height:0;border-left:4px solid transparent;border-right:4px solid transparent;border-bottom:4px solid #d8d8d8"></div>
<div class="a" style="left:1907.5px;top:986px;width:0;height:0;border-left:4px solid transparent;border-right:4px solid transparent;border-top:4px solid #d8d8d8"></div>
<div id="hsb" class="a"></div>
<div class="a" style="left:6px;top:1001px;width:0;height:0;border-top:4px solid transparent;border-bottom:4px solid transparent;border-right:4px solid #7a7a7a"></div>
<div class="a" style="left:1893px;top:1001px;width:0;height:0;border-top:4px solid transparent;border-bottom:4px solid transparent;border-left:4px solid #7a7a7a"></div>
<div id="status" class="a"></div>
<div class="a" style="left:9px;top:1020px;font-size:11.5px;line-height:14px;color:#e8e8e8">Page 1 of 2</div>
<div class="a" style="left:1717px;top:1016px;width:1px;height:19px;background:#474747"></div>
<div class="a" style="left:1729px;top:1019.5px;font-size:11.5px;line-height:14px;color:#e8e8e8">100%</div>
<svg class="a" style="left:1760px;top:1013px" width="160" height="27" viewBox="1760 1013 160 27"><defs><linearGradient id="cg" x1="0" y1="0" x2="0" y2="1"><stop offset="0" stop-color="#e0e0e0"/><stop offset="1" stop-color="#a8a8a8"/></linearGradient></defs><circle cx="1779" cy="1027" r="7" fill="url(#cg)"/><rect x="1775" y="1026" width="8" height="2.4" fill="#4a4a4a"/><defs><linearGradient id="tg" x1="0" x2="1"><stop offset="0" stop-color="#3a3a3a" stop-opacity="0"/><stop offset="0.2" stop-color="#3a3a3a"/><stop offset="0.8" stop-color="#3a3a3a"/><stop offset="1" stop-color="#3a3a3a" stop-opacity="0"/></linearGradient></defs><rect x="1790" y="1026.5" width="101" height="1" fill="url(#tg)"/><path d="M1836,1020 h9 v10.5 l-4.5,4.8 l-4.5,-4.8 Z" fill="#e8e8e8"/><circle cx="1903" cy="1027" r="7" fill="url(#cg)"/><rect x="1899" y="1026" width="8" height="2.4" fill="#4a4a4a"/><rect x="1901.8" y="1023" width="2.4" height="8" fill="#4a4a4a"/></svg>
<div id="black" class="a"></div>
<div class="a" style="left:588px;top:1040px;width:48px;height:2px;background:#c0651f"></div>
<div class="a" style="left:735px;top:1040px;width:44px;height:2px;background:#333"></div>
<div id="rborder" class="a"></div>
</body></html>
